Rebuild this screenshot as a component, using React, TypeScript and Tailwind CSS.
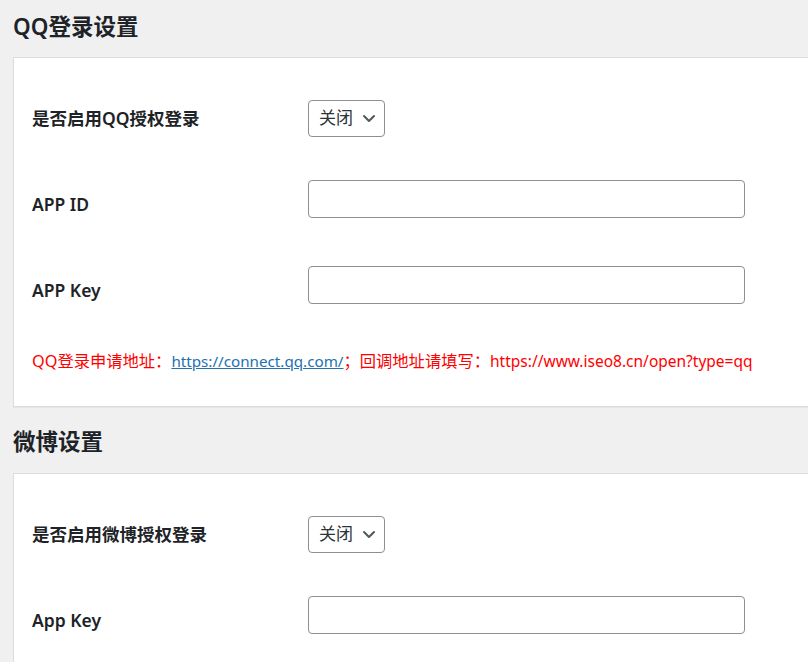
import React from 'react';

const font = { fontFamily: '"Noto Sans", "Noto Sans CJK SC", sans-serif' };

const Select = () => (
  <div className="flex h-[37px] w-[77px] items-center justify-between rounded-[4px] border border-[#8c8f94] bg-white pl-[10px] pr-[7px] text-[17px] text-[#2c3338]">
    <span>关闭</span>
    <svg width="16" height="16" viewBox="0 0 16 16" fill="none">
      <polyline points="3,6 8,11 13,6" stroke="#50575e" strokeWidth="2" strokeLinecap="round" strokeLinejoin="round" />
    </svg>
  </div>
);

const Input = () => (
  <div className="mb-[11px] h-[38px] w-[437px] rounded-[4px] border border-[#8c8f94] bg-white" />
);

const Row = ({ label, children }: { label: string; children: React.ReactNode }) => (
  <div className="flex h-[86px] items-center">
    <div className="w-[294px] shrink-0 pl-[18px] text-[17.5px] font-semibold text-[#1d2327]">{label}</div>
    {children}
  </div>
);

const App = () => {
  return (
    <div className="min-h-[662px] overflow-hidden bg-[#f0f0f1] pl-[13px]" style={font}>
      <h2 className="pt-[12px] text-[22.5px] font-semibold leading-[29px] text-[#1d2327]">QQ登录设置</h2>
      <div className="mt-[16px] w-[830px] border border-[#dcdcde] bg-white pt-[17px] pb-[34px] shadow-[0_1px_1px_rgba(0,0,0,0.04)]">
        <Row label="是否启用QQ授权登录"><Select /></Row>
        <Row label="APP ID"><Input /></Row>
        <Row label="APP Key"><Input /></Row>
        <p className="mt-[17px] pl-[18px] text-[16.3px] leading-[22px] text-[#ff0000]">
          QQ登录申请地址：<a className="text-[15.2px] text-[#2271b1] underline">https://connect.qq.com/</a>；回调地址请填写：<span className="text-[15.5px]">https://www.iseo8.cn/open?type=qq</span>
        </p>
      </div>
      <h2 className="mt-[20px] text-[22.5px] font-semibold leading-[29px] text-[#1d2327]">微博设置</h2>
      <div className="mt-[17px] w-[830px] border border-[#dcdcde] bg-white pt-[17px] pb-[34px]">
        <Row label="是否启用微博授权登录"><Select /></Row>
        <Row label="App Key"><Input /></Row>
      </div>
    </div>
  );
};

export default App;
